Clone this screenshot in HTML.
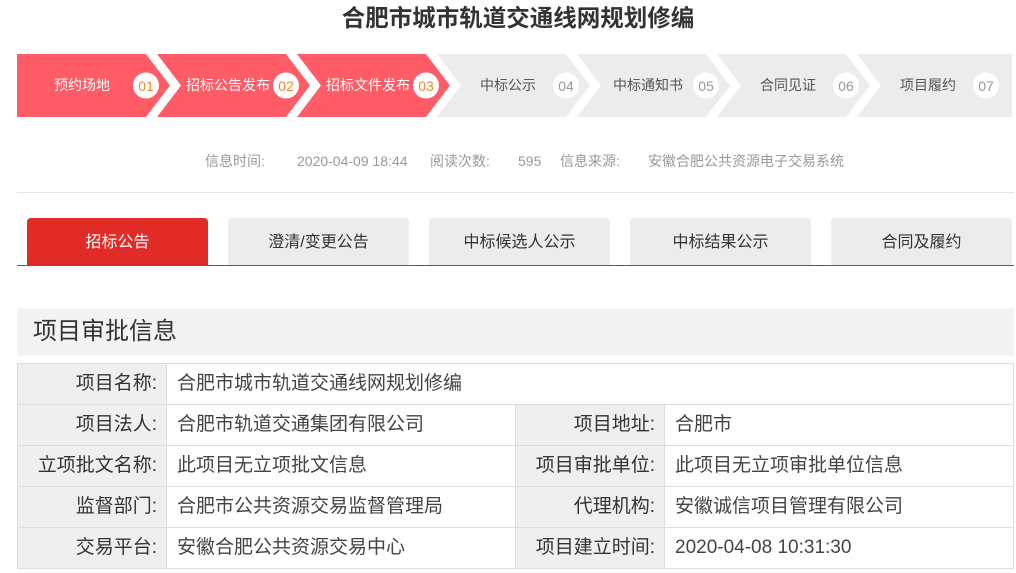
<!DOCTYPE html>
<html><head><meta charset="utf-8"><style>
*{margin:0;padding:0;box-sizing:border-box}
body{width:1016px;height:573px;background:#fff;font-family:"Liberation Sans","Noto Sans CJK SC",sans-serif;position:relative;overflow:hidden;color:#333}
.a{position:absolute}
.t{white-space:nowrap}
.tab{position:absolute;top:218px;height:47px;width:181px;background:#ececec;border-radius:4px 4px 0 0;text-align:center;line-height:49px;font-size:16px;color:#333}
.c{position:absolute;border:1px solid #ddd;font-size:19px;line-height:39px;height:42px;white-space:nowrap}
.l{background:#efefef;text-align:right;padding-right:9px;color:#333}
.v{background:#fff;padding-left:10px;color:#444}
</style></head><body>
<div class="a t" style="left:0;width:1036px;top:2px;text-align:center;font-size:23.5px;font-weight:bold;color:#333;line-height:32px">合肥市城市轨道交通线网规划修编</div>
<svg class="a" style="left:0;top:0" width="1016" height="130">
<polygon points="17,54 146,54 170,85.5 146,117 17,117" fill="#ff5c67"/>
<polygon points="157,54 286,54 310,85.5 286,117 157,117 181,85.5" fill="#ff5c67"/>
<polygon points="297,54 426,54 450,85.5 426,117 297,117 321,85.5" fill="#ff5c67"/>
<polygon points="437,54 566,54 590,85.5 566,117 437,117 461,85.5" fill="#ececec"/>
<polygon points="577,54 706,54 730,85.5 706,117 577,117 601,85.5" fill="#ececec"/>
<polygon points="717,54 846,54 870,85.5 846,117 717,117 741,85.5" fill="#ececec"/>
<polygon points="857,54 1012,54 1012,117 857,117 881,85.5" fill="#ececec"/>
<g font-size="14" font-family="Liberation Sans,Noto Sans CJK SC,sans-serif" text-anchor="middle">
<text x="82" y="90" fill="#fff">预约场地</text>
<text x="228" y="90" fill="#fff">招标公告发布</text>
<text x="368" y="90" fill="#fff">招标文件发布</text>
<text x="508" y="90" fill="#555">中标公示</text>
<text x="648" y="90" fill="#555">中标通知书</text>
<text x="788" y="90" fill="#555">合同见证</text>
<text x="928" y="90" fill="#555">项目履约</text>
</g>
<g font-size="14" font-family="Liberation Sans,sans-serif" text-anchor="middle">
<circle cx="146" cy="85.5" r="13" fill="#fff"/><text x="146" y="91" fill="#f08a2c">01</text>
<circle cx="286" cy="85.5" r="13" fill="#fff"/><text x="286" y="91" fill="#f08a2c">02</text>
<circle cx="426" cy="85.5" r="13" fill="#fff"/><text x="426" y="91" fill="#f08a2c">03</text>
<circle cx="566" cy="85.5" r="13" fill="#fff"/><text x="566" y="91" fill="#999">04</text>
<circle cx="706" cy="85.5" r="13" fill="#fff"/><text x="706" y="91" fill="#999">05</text>
<circle cx="846" cy="85.5" r="13" fill="#fff"/><text x="846" y="91" fill="#999">06</text>
<circle cx="986" cy="85.5" r="13" fill="#fff"/><text x="986" y="91" fill="#999">07</text>
</g>
</svg>
<div class="a t" style="top:152px;font-size:14px;color:#999;line-height:19px">
<span class="a" style="left:205px">信息时间:</span><span class="a" style="left:297px">2020-04-09 18:44</span><span class="a" style="left:430px">阅读次数:</span><span class="a" style="left:518px">595</span><span class="a" style="left:560px">信息来源:</span><span class="a" style="left:648px">安徽合肥公共资源电子交易系统</span></div>
<div class="a" style="left:17px;top:192px;width:997px;height:1px;background:#e5e5e5"></div>
<div class="tab" style="left:27px;background:#e02b27;color:#fff">招标公告</div>
<div class="tab" style="left:228px">澄清/变更公告</div>
<div class="tab" style="left:429px">中标候选人公示</div>
<div class="tab" style="left:630px">中标结果公示</div>
<div class="tab" style="left:831px">合同及履约</div>
<div class="a" style="left:17px;top:265px;width:997px;height:1px;background:#b33"></div>
<div class="a t" style="left:17px;top:308px;width:997px;height:48px;background:#f3f3f3;font-size:24px;line-height:48px;padding-left:16px;color:#333">项目审批信息</div>
<div class="c l" style="left:17px;top:363px;width:150px">项目名称:</div><div class="c v" style="left:166px;top:363px;width:848px">合肥市城市轨道交通线网规划修编</div>
<div class="c l" style="left:17px;top:404px;width:150px">项目法人:</div><div class="c v" style="left:166px;top:404px;width:350px">合肥市轨道交通集团有限公司</div><div class="c l" style="left:515px;top:404px;width:150px">项目地址:</div><div class="c v" style="left:664px;top:404px;width:350px">合肥市</div>
<div class="c l" style="left:17px;top:445px;width:150px">立项批文名称:</div><div class="c v" style="left:166px;top:445px;width:350px">此项目无立项批文信息</div><div class="c l" style="left:515px;top:445px;width:150px">项目审批单位:</div><div class="c v" style="left:664px;top:445px;width:350px">此项目无立项审批单位信息</div>
<div class="c l" style="left:17px;top:486px;width:150px">监督部门:</div><div class="c v" style="left:166px;top:486px;width:350px">合肥市公共资源交易监督管理局</div><div class="c l" style="left:515px;top:486px;width:150px">代理机构:</div><div class="c v" style="left:664px;top:486px;width:350px">安徽诚信项目管理有限公司</div>
<div class="c l" style="left:17px;top:527px;width:150px">交易平台:</div><div class="c v" style="left:166px;top:527px;width:350px">安徽合肥公共资源交易中心</div><div class="c l" style="left:515px;top:527px;width:150px">项目建立时间:</div><div class="c v" style="left:664px;top:527px;width:350px">2020-04-08 10:31:30</div>
</body></html>
